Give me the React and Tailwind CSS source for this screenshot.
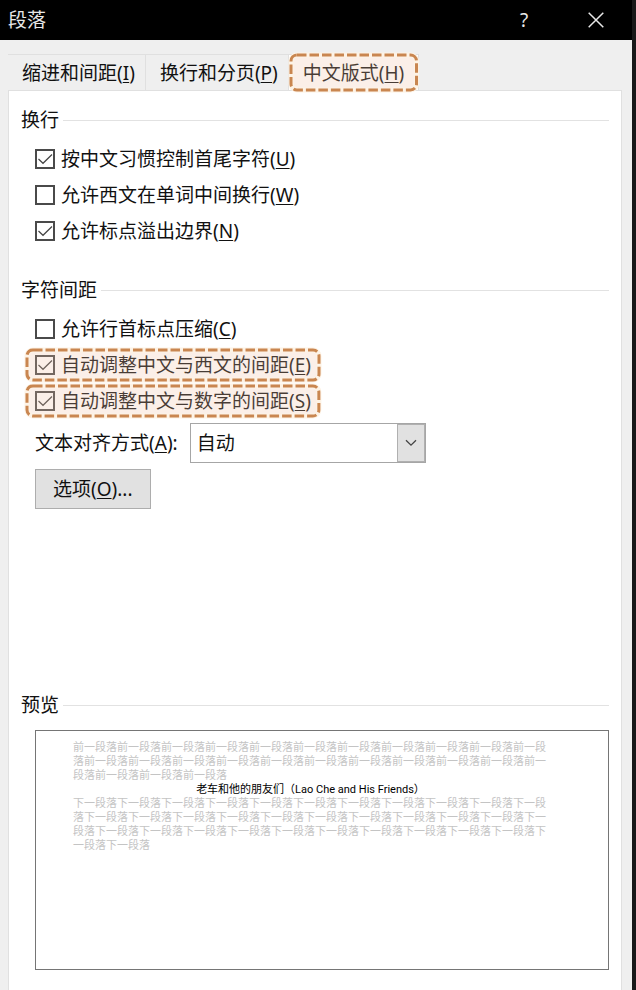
import React, { useState } from 'react';

const TABS = [
  { id: 'indent', text: '缩进和间距', accessKey: 'I' },
  { id: 'breaks', text: '换行和分页', accessKey: 'P' },
  { id: 'asian', text: '中文版式', accessKey: 'H', marked: true },
];

const LINE_BREAKS = [
  { id: 'kinsoku', text: '按中文习惯控制首尾字符', accessKey: 'U', checked: true },
  { id: 'wordwrap', text: '允许西文在单词中间换行', accessKey: 'W', checked: false },
  { id: 'overflow', text: '允许标点溢出边界', accessKey: 'N', checked: true },
];

const SPACING = [
  { id: 'compress', text: '允许行首标点压缩', accessKey: 'C', checked: false },
  { id: 'latin', text: '自动调整中文与西文的间距', accessKey: 'E', checked: true, marked: true },
  { id: 'digits', text: '自动调整中文与数字的间距', accessKey: 'S', checked: true, marked: true },
];

function Caption({ text, accessKey, suffix = '' }) {
  return (
    <span className="whitespace-nowrap">
      {text}(<u className="decoration-1 underline-offset-2">{accessKey}</u>){suffix}
    </span>
  );
}

// Dashed marker drawn over the item it is placed in
function Marker({ className }) {
  return (
    <span className={`pointer-events-none absolute ${className}`}>
      <svg className="block h-full w-full overflow-visible" aria-hidden="true">
        <rect width="100%" height="100%" rx="6" fill="#efbfa3" fillOpacity="0.25" stroke="#fdf3e6" strokeWidth="5" />
        <rect
          width="100%"
          height="100%"
          rx="6"
          fill="none"
          stroke="#c98650"
          strokeWidth="3"
          strokeDasharray="9.5 3"
        />
      </svg>
    </span>
  );
}

function Group({ title, className = '', children }) {
  return (
    <section className={className}>
      <div className="flex h-[26px] items-center gap-1">
        <h2 className="leading-[26px]">{title}</h2>
        <div className="h-px flex-1 bg-[#e2e2e2]"></div>
      </div>
      <div className="pl-3.5">{children}</div>
    </section>
  );
}

function CheckRow({ item, checked, onChange }) {
  return (
    <div className="flex h-9 items-center">
      <label htmlFor={item.id} className="relative flex items-center gap-1.5">
        <span className="relative h-5 w-5 shrink-0">
          <input
            id={item.id}
            type="checkbox"
            checked={checked}
            onChange={onChange}
            className="block h-5 w-5 appearance-none border-2 border-[#4a4a4a] bg-white"
          />
          {checked && (
            <svg
              viewBox="0 0 20 20"
              className="pointer-events-none absolute inset-0 h-5 w-5"
              fill="none"
              stroke="#444444"
              strokeWidth="1.2"
            >
              <path d="M3.5 10 8 14.3 17 5.5" />
            </svg>
          )}
        </span>
        <Caption text={item.text} accessKey={item.accessKey} />
        {item.marked && <Marker className="-inset-x-2 -inset-y-px" />}
      </label>
    </div>
  );
}

export default function App() {
  const [activeTab, setActiveTab] = useState('asian');
  const [align, setAlign] = useState('自动');
  const [values, setValues] = useState(() =>
    Object.fromEntries([...LINE_BREAKS, ...SPACING].map((item) => [item.id, item.checked]))
  );

  const toggle = (id) => setValues((prev) => ({ ...prev, [id]: !prev[id] }));

  const renderRow = (item) => (
    <CheckRow key={item.id} item={item} checked={values[item.id]} onChange={() => toggle(item.id)} />
  );

  return (
    <div className="flex min-h-screen bg-[#191919] pr-1 font-['Noto_Sans','Noto_Sans_CJK_SC',sans-serif] text-[19px] leading-7 text-[#111111]">
      <div className="flex flex-1 flex-col bg-[#efefef]">
        {/* Title bar */}
        <header className="flex h-10 items-center bg-black pl-2 text-[#e8e8e8]">
          <h1 className="flex-1">段落</h1>
          <button type="button" aria-label="帮助" className="flex h-10 w-18 items-center justify-center">
            ?
          </button>
          <button type="button" aria-label="关闭" className="flex h-10 w-18 items-center justify-center">
            <svg viewBox="0 0 16 16" className="h-4 w-4" fill="none" stroke="currentColor" strokeWidth="1.5">
              <path d="M.7.7 15.3 15.3M15.3.7.7 15.3" />
            </svg>
          </button>
        </header>

        <main className="flex flex-1 flex-col pt-3.5 pr-2.5 pl-2">
          {/* Tabs */}
          <div role="tablist" className="flex">
            {TABS.map((tab) => (
              <button
                key={tab.id}
                type="button"
                role="tab"
                aria-selected={activeTab === tab.id}
                onClick={() => setActiveTab(tab.id)}
                className={`relative h-9 border-t border-r border-[#e0e0e0] pl-3.5 ${
                  activeTab === tab.id ? 'bg-white pr-3.5' : 'pr-2.5'
                }`}
              >
                <Caption text={tab.text} accessKey={tab.accessKey} />
                {tab.marked && <Marker className="inset-x-0.5 inset-y-0" />}
              </button>
            ))}
          </div>

          {/* Tab page */}
          <div role="tabpanel" className="flex flex-1 flex-col border border-b-0 border-[#e0e0e0] bg-white px-3 pt-4 pb-5">
            <Group title="换行">
              <div className="pt-2">{LINE_BREAKS.map(renderRow)}</div>
            </Group>

            <Group title="字符间距" className="mt-7">
              <div className="pt-2">{SPACING.map(renderRow)}</div>
              <div className="mt-1 flex items-center gap-3">
                <label htmlFor="align">
                  <Caption text="文本对齐方式" accessKey="A" suffix=":" />
                </label>
                <div className="relative h-10 w-59">
                  <select
                    id="align"
                    value={align}
                    onChange={(e) => setAlign(e.target.value)}
                    className="block h-10 w-full appearance-none border border-[#a6a6a6] bg-white pr-8 pl-1.5"
                  >
                    <option>自动</option>
                    <option>顶端对齐</option>
                    <option>居中</option>
                    <option>基线对齐</option>
                    <option>底端对齐</option>
                  </select>
                  <span className="pointer-events-none absolute inset-y-px right-px flex w-7 items-center justify-center border border-[#b0b0b0] bg-[#e1e1e1]">
                    <svg viewBox="0 0 12 8" className="h-2 w-3" fill="none" stroke="#444444" strokeWidth="1.3">
                      <path d="M1 1.2 6 6.2 11 1.2" />
                    </svg>
                  </span>
                </div>
              </div>
              <button type="button" className="mt-1.5 h-10 border border-[#adadad] bg-[#e1e1e1] px-[17px]">
                <Caption text="选项" accessKey="O" suffix="..." />
              </button>
            </Group>

            {/* Preview */}
            <Group title="预览" className="mt-auto">
              <div className="mt-3 h-60 border border-[#757575] px-[37px] pt-2.5 font-['Roboto','Noto_Sans_CJK_SC',sans-serif] text-[11px] leading-[14px] text-[#c4c4c4]">
                <div className="max-w-[475px] break-all">
                  <p>{'前一段落'.repeat(25)}</p>
                  <p className="text-center text-black">老车和他的朋友们（Lao Che and His Friends）</p>
                  <p>{'下一段落'.repeat(34)}</p>
                </div>
              </div>
            </Group>
          </div>
        </main>
      </div>
    </div>
  );
}
